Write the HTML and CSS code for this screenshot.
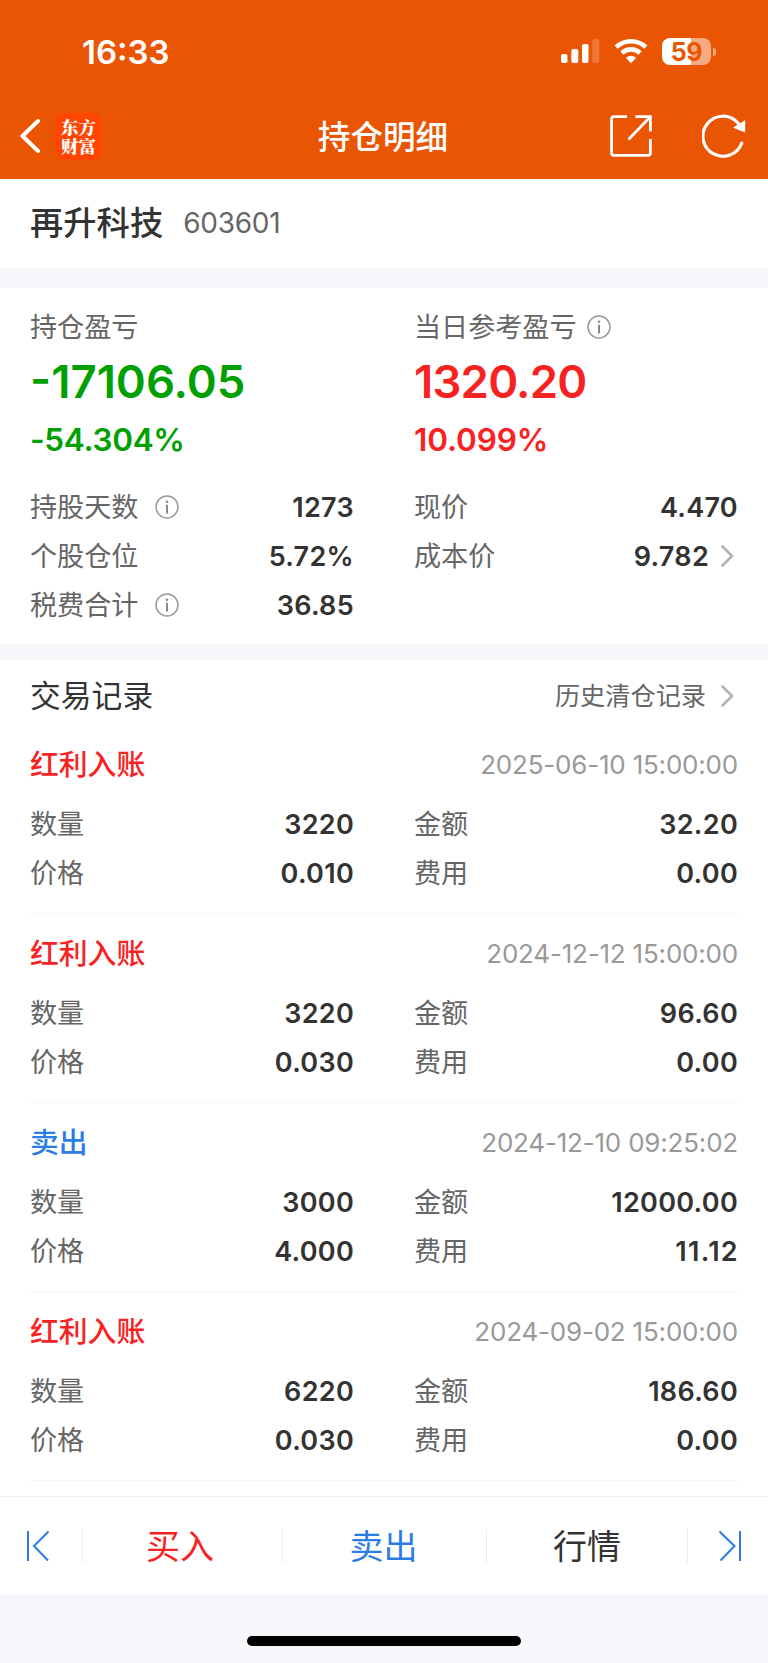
FILE: index.html
```html
<!DOCTYPE html>
<html lang="zh-CN">
<head>
<meta charset="utf-8">
<title>持仓明细</title>
<link rel="stylesheet" href="styles.css">
</head>
<body>
<svg class="defs" aria-hidden="true">
  <symbol id="info" viewBox="0 0 24 24"><circle cx="12" cy="12" r="11" fill="none" stroke="#999" stroke-width="1.5"/><circle cx="12" cy="6.8" r="1.3" fill="#888"/><path d="M12 9.8V18.6" stroke="#888" stroke-width="2"/></symbol>
  <symbol id="more" viewBox="0 0 13 22"><path d="M1.5 1.5L11 11L1.5 20.5" fill="none" stroke="#b2b2b2" stroke-width="2.6" stroke-linecap="round"/></symbol>
</svg>
<header class="header">
  <div class="status">
    <span class="clock">16:33</span>
    <div class="indicators">
      <svg class="signal" viewBox="0 0 40 26" fill="#fff"><rect x="1" y="16" width="6.5" height="9" rx="2"/><rect x="11.3" y="11" width="7" height="14" rx="2"/><rect x="22" y="6" width="6.5" height="19" rx="2"/><rect x="32.3" y="1" width="7" height="24" rx="2" opacity=".2"/></svg>
      <svg class="wifi" viewBox="0 0 34 26" fill="none" stroke="#fff" stroke-width="4.6"><path d="M2.2 9.2A21.5 21.5 0 0 1 31.8 9.2"/><path d="M7.9 15A13.2 13.2 0 0 1 26.1 15"/><path d="M17 25.2L11.8 19.7Q17 15.8 22.2 19.7Z" fill="#fff" stroke="none"/></svg>
      <div class="battery"><span class="level">59</span><i class="cap"></i></div>
    </div>
  </div>
  <nav class="nav">
    <div class="nav-left">
      <svg class="back" viewBox="0 0 20 34"><path d="M18 2L2.5 17L18 32" fill="none" stroke="#fff" stroke-width="4" stroke-linecap="round" stroke-linejoin="round"/></svg>
      <div class="logo"><span>东方</span><span>财富</span></div>
    </div>
    <h1 class="title">持仓明细</h1>
    <div class="nav-right">
      <svg class="share" viewBox="0 0 42 42" fill="none" stroke="#fff" stroke-width="2.8"><path d="M17 1.6H4Q1.6 1.6 1.6 4V38Q1.6 40.4 4 40.4H38Q40.4 40.4 40.4 38V24M25.5 1.6H40.4V16.5M40 2L18.5 24.5"/></svg>
      <svg class="refresh" viewBox="0 0 44 44"><path d="M39.7 29.2A20 20 0 1 1 35.5 8.5L38 11.5" fill="none" stroke="#fff" stroke-width="3.2" stroke-linecap="round"/><path d="M43.2 6V18.5L31 13.8Z" fill="#fff"/></svg>
    </div>
  </nav>
</header>
<section class="stock"><span class="stock-name">再升科技</span><span class="stock-code">603601</span></section>
<section class="summary">
  <div class="pair">
    <div class="col profit loss"><div class="label">持仓盈亏</div><div class="amount">-17106.05</div><div class="rate">-54.304%</div></div>
    <div class="col profit gain"><div class="label">当日参考盈亏<svg class="info near"><use href="#info"/></svg></div><div class="amount">1320.20</div><div class="rate">10.099%</div></div>
  </div>
  <div class="pair facts">
    <div class="col">
      <div class="row"><span>持股天数<svg class="info"><use href="#info"/></svg></span><b>1273</b></div>
      <div class="row"><span>个股仓位</span><b>5.72%</b></div>
      <div class="row"><span>税费合计<svg class="info"><use href="#info"/></svg></span><b>36.85</b></div>
    </div>
    <div class="col">
      <div class="row"><span>现价</span><b>4.470</b></div>
      <div class="row"><span>成本价</span><b>9.782<svg class="more"><use href="#more"/></svg></b></div>
    </div>
  </div>
</section>
<main class="records">
  <div class="records-head"><h2>交易记录</h2><a class="history">历史清仓记录<svg class="more"><use href="#more"/></svg></a></div>
  <article class="record">
    <div class="record-head"><h3 class="red">红利入账</h3><time>2025-06-10 15:00:00</time></div>
    <div class="pair">
      <div class="col"><div class="row"><span>数量</span><b>3220</b></div><div class="row"><span>价格</span><b>0.010</b></div></div>
      <div class="col"><div class="row"><span>金额</span><b>32.20</b></div><div class="row"><span>费用</span><b>0.00</b></div></div>
    </div>
  </article>
  <article class="record">
    <div class="record-head"><h3 class="red">红利入账</h3><time>2024-12-12 15:00:00</time></div>
    <div class="pair">
      <div class="col"><div class="row"><span>数量</span><b>3220</b></div><div class="row"><span>价格</span><b>0.030</b></div></div>
      <div class="col"><div class="row"><span>金额</span><b>96.60</b></div><div class="row"><span>费用</span><b>0.00</b></div></div>
    </div>
  </article>
  <article class="record">
    <div class="record-head"><h3 class="blue">卖出</h3><time>2024-12-10 09:25:02</time></div>
    <div class="pair">
      <div class="col"><div class="row"><span>数量</span><b>3000</b></div><div class="row"><span>价格</span><b>4.000</b></div></div>
      <div class="col"><div class="row"><span>金额</span><b>12000.00</b></div><div class="row"><span>费用</span><b class="ones">11.12</b></div></div>
    </div>
  </article>
  <article class="record">
    <div class="record-head"><h3 class="red">红利入账</h3><time>2024-09-02 15:00:00</time></div>
    <div class="pair">
      <div class="col"><div class="row"><span>数量</span><b>6220</b></div><div class="row"><span>价格</span><b>0.030</b></div></div>
      <div class="col"><div class="row"><span>金额</span><b>186.60</b></div><div class="row"><span>费用</span><b>0.00</b></div></div>
    </div>
  </article>
</main>
<footer class="actions">
  <div class="edge"><svg class="step" viewBox="0 0 24 32"><path d="M2 1V31M22.5 1.5L8 16L22 30.5"/></svg></div>
  <div class="action buy red">买入</div>
  <div class="action sell blue">卖出</div>
  <div class="action">行情</div>
  <div class="edge last"><svg class="step" viewBox="0 0 24 32"><path d="M22 1V31M1.5 1.5L16.5 16L2.5 30.5"/></svg></div>
</footer>
<div class="home"><div class="home-bar"></div></div>
</body>
</html>
```
FILE: styles.css
```css
* { box-sizing: border-box; margin: 0; padding: 0; }
body {
  width: 768px; height: 1663px; overflow: hidden;
  display: flex; flex-direction: column;
  background: #f6f7fa; color: #333;
  font-family: Inter, "Noto Sans CJK SC", sans-serif;
}
.defs { position: absolute; width: 0; height: 0; }
.header { height: 179px; background: #ea5504; color: #fff; flex: none; }
.status { height: 92px; padding: 10px 52px 0 82px; display: flex; justify-content: space-between; align-items: center; }
.clock { font-size: 33px; font-weight: 600; line-height: 40px; padding-top: 1px; }
.indicators { display: flex; align-items: center; }
.signal { width: 40px; height: 26px; margin-right: 14px; }
.wifi { width: 34px; height: 26px; margin-right: 14px; }
.battery {
  position: relative; width: 49px; height: 27px; margin-right: 5px; border-radius: 8px;
  background: linear-gradient(90deg, #fff 59%, #f5aa81 59%);
  color: #ea5504; text-align: center;
}
.level { display: block; font-size: 25px; font-weight: 700; line-height: 28px; letter-spacing: -.3px; }
.cap { position: absolute; left: 51px; top: 10px; width: 3px; height: 8px; border-radius: 0 4px 4px 0; background: #f5aa81; }
.nav { height: 87px; padding: 1px 22px 0 20px; display: grid; grid-template-columns: 1fr auto 1fr; align-items: center; }
.nav-left { display: flex; align-items: center; gap: 15px; }
.back { width: 20px; height: 34px; }
.logo {
  width: 47px; height: 47px; border-radius: 10px; background: #ff4500;
  display: flex; flex-direction: column; align-items: center; justify-content: center;
  font-family: "Noto Serif CJK SC", "Noto Sans CJK SC", serif; font-size: 17.5px; font-weight: 900; line-height: 19px;
}
.logo span { height: 19px; }
.title { font-size: 32.6px; font-weight: 500; line-height: 44px; padding-top: 1px; }
.nav-right { display: flex; justify-content: flex-end; align-items: center; gap: 50px; }
.share { width: 42px; height: 42px; }
.refresh { width: 44px; height: 44px; }
.stock { height: 89px; background: #fff; padding: 0 30px; display: flex; align-items: center; flex: none; }
.stock-name { font-size: 33.3px; font-weight: 500; line-height: 44px; margin-top: -2px; }
.stock-code { margin-left: 20px; font-size: 28px; line-height: 44px; letter-spacing: -.25px; margin-top: -1px; color: #666; }
.summary { margin-top: 20px; height: 356px; background: #fff; padding: 20px 30px 0; flex: none; }
.pair { display: grid; grid-template-columns: 324px 324px; column-gap: 60px; }
.label { height: 40px; display: flex; align-items: center; font-size: 27.1px; line-height: 40px; color: #666; }
.info { width: 24px; height: 24px; margin-left: 17px; flex: none; }
.info.near { margin-left: 10px; margin-top: -2px; }
.amount { font-size: 45.5px; font-weight: 600; line-height: 68px; }
.rate { font-size: 31.5px; font-weight: 600; line-height: 47px; letter-spacing: -.3px; }
.gain .amount { letter-spacing: -.8px; }
.gain .rate { letter-spacing: -.1px; }
.loss .amount, .loss .rate { color: #00a000; }
.gain .amount, .gain .rate { color: #f82222; }
.facts { margin-top: 19px; }
.row { height: 49px; display: flex; justify-content: space-between; align-items: center; font-size: 27.1px; line-height: 49px; padding-top: 1px; }
.row span { color: #666; display: flex; align-items: center; }
.row b { font-weight: 600; display: flex; align-items: center; font-size: 27px; letter-spacing: .3px; }
.row .ones { letter-spacing: 1.3px; margin-right: -1px; }
.row svg { margin-top: -1px; }
.more { width: 13px; height: 22px; margin: 0 4px 0 12px; flex: none; }
.records { margin-top: 16px; height: 836px; background: #fff; padding: 0 30px; flex: none; }
.records-head { height: 65px; padding-top: 7px; display: flex; justify-content: space-between; align-items: center; }
.records-head h2 { font-size: 30.8px; font-weight: 400; line-height: 44px; }
.history { display: flex; align-items: center; font-size: 25.2px; color: #666; line-height: 44px; }
.history .more { margin-left: 15px; }
.record { height: 189px; padding-top: 9px; border-bottom: 1px solid #f5f5f6; }
.record-head { height: 60px; margin-bottom: 5px; padding-top: 1px; display: flex; justify-content: space-between; align-items: center; }
.record-head h3 { font-size: 28.8px; font-weight: 500; line-height: 44px; }
.record-head time { font-size: 26px; line-height: 44px; letter-spacing: -.2px; color: #999; }
.red { color: #f82222; }
.blue { color: #2b7de5; }
.actions { height: 99px; background: #fff; border-top: 1px solid #efeff1; display: grid; grid-template-columns: 83px 200px 204px 1fr 81px; align-items: center; flex: none; }
.edge, .action { height: 34px; display: flex; align-items: center; justify-content: center; }
.edge, .action:not(:nth-child(4)) { border-right: 1px solid #ededf0; }
.action { font-size: 34px; line-height: 34px; padding-top: 2px; }
.buy { padding-right: 5px; }
.sell { padding-right: 2px; }
.edge { padding-right: 7px; }
.edge.last { border-right: 0; border-left: 1px solid #ededf0; padding: 0 0 0 3px; }
.step { width: 24px; height: 32px; fill: none; stroke: #2b7de5; stroke-width: 2; }
.home { height: 68px; padding-top: 41px; flex: none; }
.home-bar { width: 274px; height: 10px; margin: 0 auto; border-radius: 5px; background: #000; }
```
